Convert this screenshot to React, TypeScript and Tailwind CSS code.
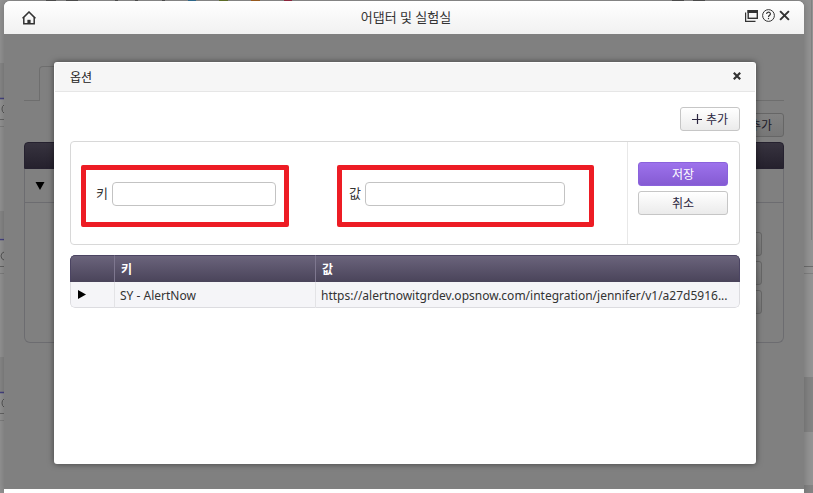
import { useState } from 'react'

const OPTIONS = [
  {
    key: 'SY - AlertNow',
    value: 'https://alertnowitgrdev.opsnow.com/integration/jennifer/v1/a27d5916...',
  },
]

const BUTTON =
  'h-6 rounded-[3px] border border-[#c6c6c6] bg-linear-to-b from-white to-[#ebebeb] pt-[2px] text-xs leading-none text-[#2b2640]'

function HomeIcon() {
  return (
    <svg width="14" height="14" viewBox="0 0 14 14" fill="none" stroke="#333" strokeWidth="1.5" aria-hidden="true">
      <path d="M0.6 7.4 L7 1 L13.4 7.4" />
      <path d="M1.8 6.4 V12.8 H12.2 V6.4" />
      <path d="M5.4 12.8 V8.8 H8.6 V12.8 Z" fill="#333" stroke="none" />
    </svg>
  )
}

function PopupIcon() {
  return (
    <svg width="13" height="12" viewBox="0 0 13 12" fill="none" stroke="#333" aria-hidden="true">
      <path d="M0.6 2.5 V11.4 H10.5" strokeWidth="1.2" />
      <rect x="3.2" y="0.7" width="9.1" height="7.6" strokeWidth="1.4" />
      <path d="M2.5 1.5 H13" strokeWidth="3" />
    </svg>
  )
}

function HelpIcon() {
  return (
    <svg width="13" height="13" viewBox="0 0 13 13" fill="none" stroke="#333" aria-hidden="true">
      <circle cx="6.5" cy="6.5" r="5.9" />
      <path d="M4.6 5.1 C4.6 2.6 8.4 2.6 8.4 4.9 C8.4 6.2 6.5 6.2 6.5 7.9" strokeWidth="1.2" />
      <path d="M6.5 8.9 V10.2" strokeWidth="1.2" />
    </svg>
  )
}

function CloseIcon({ size }: { size: number }) {
  return (
    <svg width={size} height={size} viewBox="0 0 10 10" stroke="#333" strokeWidth="1.8" aria-hidden="true">
      <path d="M1 1 L9 9 M9 1 L1 9" />
    </svg>
  )
}

function SmallCloseIcon() {
  return (
    <svg width="8" height="8" viewBox="0 0 8 8" stroke="#333" strokeWidth="2.2" aria-hidden="true">
      <path d="M0.8 0.8 L7.2 7.2 M7.2 0.8 L0.8 7.2" />
    </svg>
  )
}

function PlusIcon() {
  return (
    <svg className="-mt-[2px]" width="10" height="10" viewBox="0 0 10 10" stroke="currentColor" aria-hidden="true">
      <path d="M0 5.5 H10 M5.5 0 V10" strokeWidth="1.2" />
    </svg>
  )
}

// Slivers of the dashboard that show round the edge of the window
function Dashboard() {
  return (
    <div className="absolute inset-0 overflow-hidden bg-[#949494]" aria-hidden="true">
      <svg width="100%" height="1">
        <path d="M46 0.5 H56 M66 0.5 H78 M115 0.5 H118 M135 0.5 H138 M162 0.5 H165" stroke="#555" />
        <path d="M188 0.5 H196" stroke="#35759b" />
        <path d="M219 0.5 H228" stroke="#67792c" />
        <path d="M251 0.5 H260" stroke="#a96522" />
        <path d="M284 0.5 H292" stroke="#9c2a43" />
        <path d="M672 0.5 H684 M693 0.5 H705" stroke="#555" />
      </svg>
      <svg className="absolute left-0 top-0" width="4" height="493">
        <path d="M0 63 H4 V98 H0 Z M0 211 H4 V238 H0 Z M0 357 H4 V392 H0 Z" fill="#888" />
        <path d="M0 98.5 H4 M0 239.5 H4 M0 392.5 H4" stroke="#454280" strokeWidth="1.4" />
        <path d="M0 119.5 H4 M0 266.5 H4 M0 413.5 H4" stroke="#666" />
        <path d="M0 126.5 H4 M0 273.5 H4 M0 420.5 H4" stroke="#808080" />
        <path d="M4 105 Q2 106 2 109 Q2 112 4 113 M4 252 Q1 253 1 256 Q1 259 4 260 M4 399 Q2 400 2 403 Q2 406 4 407" stroke="#555" fill="none" />
      </svg>
      <svg className="absolute right-0 top-0" width="9" height="493">
        <path d="M7.5 0 V240" stroke="#828282" />
        <path d="M0 266.5 H9" stroke="#6d6d6d" />
        <path d="M0 273.5 H9" stroke="#808080" />
        <path d="M0 377 H9 V432 H0 Z M0 485 H9 V493 H0 Z" fill="#848484" />
      </svg>
    </div>
  )
}

// Adapter list, dimmed while the option dialog is open
function AdapterList() {
  return (
    <div className="px-5 pb-[146px] pt-8" inert>
      <div className="flex h-[35px]">
        <div className="w-[15px] border-b border-[#6e6e6e]" />
        <div className="w-24 rounded-t border border-b-0 border-[#6e6e6e]" />
        <div className="flex-1 border-b border-[#6e6e6e]" />
      </div>
      <div className="flex justify-end pb-[5px] pt-3">
        <button className="flex h-6 w-[60px] items-center justify-center gap-1 rounded-[3px] border border-[#666] bg-linear-to-b from-[#828282] to-[#777] pt-[2px] text-xs leading-none text-[#1c1a28]">
          <PlusIcon />
          추가
        </button>
      </div>
      <div className="h-[27px] rounded-t border border-[#25212f] bg-linear-to-b from-[#37333f] to-[#25212d]" />
      <div className="flex h-[34px] items-center border-x border-b border-[#6c6c70] px-[10px]">
        <svg width="10" height="8" viewBox="0 0 10 8" aria-hidden="true">
          <path d="M0.5 0 H9.5 L5 8 Z" fill="#000" />
        </svg>
      </div>
      <div className="flex h-[140px] flex-col items-end gap-[5px] rounded-b-md border-x border-b border-[#6c6c70] pr-[21px] pt-[29px]">
        {['top', 'middle', 'bottom'].map(name => (
          <div
            key={name}
            className="h-6 w-[90px] rounded-[3px] border border-[#666] bg-linear-to-b from-[#828282] to-[#777]"
          />
        ))}
      </div>
    </div>
  )
}

function OptionForm() {
  const [key, setKey] = useState('')
  const [value, setValue] = useState('')

  return (
    <form className="mt-[10px] flex h-[104px] rounded border border-[#d8d8d8]" onSubmit={e => e.preventDefault()}>
      <div className="flex flex-1 items-start gap-12 pl-[10px] pt-[23px]">
        <label className="flex h-[62px] items-center gap-1 rounded-[2px] border-[5px] border-[#ed1c24] pb-[4px] pl-[10px] pr-2 text-[13px] text-[#333]">
          키
          <input
            className="h-6 w-[164px] rounded border border-[#c3c3c3] bg-white px-1 outline-none"
            value={key}
            onChange={e => setKey(e.target.value)}
          />
        </label>
        <label className="flex h-[62px] items-center gap-1 rounded-[2px] border-[5px] border-[#ed1c24] pb-[4px] pl-[7px] pr-6 text-[13px] text-[#333]">
          값
          <input
            className="h-6 w-[200px] rounded border border-[#c3c3c3] bg-white px-1 outline-none"
            value={value}
            onChange={e => setValue(e.target.value)}
          />
        </label>
      </div>
      <div className="flex w-[112px] flex-col gap-[5px] border-l border-[#e8e8e8] pl-[10px] pr-[11px] pt-5">
        <button
          type="submit"
          className="h-6 rounded-[3px] border border-[#8a62dc] bg-linear-to-b from-[#9d72ec] to-[#855bd3] pt-[2px] text-xs leading-none text-white"
        >
          저장
        </button>
        <button type="button" className={BUTTON}>
          취소
        </button>
      </div>
    </form>
  )
}

function OptionTable() {
  return (
    <div className="mt-[10px] overflow-hidden rounded-[5px]">
      <table className="w-full table-fixed border-separate border-spacing-0 text-xs">
        <colgroup>
          <col className="w-11" />
          <col className="w-[201px]" />
          <col />
        </colgroup>
        <thead>
          <tr className="h-[27px] bg-linear-to-b from-[#6c657d] to-[#4a445a] text-left text-white">
            <th className="rounded-tl-[5px] border-l border-t border-[#4b4462] p-0" />
            <th className="border-l border-t border-l-[#7e778f] border-t-[#4b4462] px-[6px] pb-0 pt-[2px] font-bold">키</th>
            <th className="rounded-tr-[5px] border-x border-t border-l-[#7e778f] border-r-[#4b4462] border-t-[#4b4462] px-[6px] pb-0 pt-[2px] font-bold">
              값
            </th>
          </tr>
        </thead>
        <tbody>
          {OPTIONS.map(o => (
            <tr key={o.key} className="h-[26px] bg-[#f5f5f8] text-[#333]">
              <td className="rounded-bl-[5px] border-b border-l border-[#dcdce0] p-0 pl-[7px]">
                <svg width="8" height="9" viewBox="0 0 8 9" aria-hidden="true">
                  <path d="M0 0 L8 4.5 L0 9 Z" fill="#000" />
                </svg>
              </td>
              <td className="border-b border-l border-b-[#dcdce0] border-l-[#e3e3e6] px-[5px] pb-0 pt-[2px] font-['Noto_Sans',sans-serif]">
                {o.key}
              </td>
              <td className="whitespace-nowrap rounded-br-[5px] border-x border-b border-b-[#dcdce0] border-l-[#e3e3e6] border-r-[#dcdce0] px-[5px] pb-0 pt-[2px] font-['Noto_Sans',sans-serif]">
                {o.value}
              </td>
            </tr>
          ))}
        </tbody>
      </table>
    </div>
  )
}

function OptionDialog() {
  return (
    <section
      role="dialog"
      aria-labelledby="option-title"
      className="absolute bottom-[25px] left-[50px] right-12 top-7 overflow-hidden rounded-[3px] bg-white shadow-[0_0_6px_rgba(0,0,0,0.5)]"
    >
      <header className="m-px mb-0 flex h-[29px] items-center justify-between border-b border-[#e6e6e6] bg-[#f6f6f6] pl-[15px] pr-[14px]">
        <h2 id="option-title" className="pt-[2px] text-xs text-[#222]">
          옵션
        </h2>
        <button className="pb-[2px]" aria-label="닫기">
          <SmallCloseIcon />
        </button>
      </header>
      <div className="px-4 pt-[15px]">
        <div className="flex justify-end">
          <button className={`${BUTTON} flex w-[60px] items-center justify-center gap-1`}>
            <PlusIcon />
            추가
          </button>
        </div>
        <OptionForm />
        <OptionTable />
      </div>
    </section>
  )
}

export default function App() {
  return (
    <div className="relative flex min-h-screen flex-col overflow-hidden pl-1 pr-[9px] pt-px font-['Open_Sans','Noto_Sans_CJK_KR',sans-serif]">
      <Dashboard />
      <div className="relative flex flex-1 flex-col rounded-t-md bg-white shadow-[0_0_8px_rgba(0,0,0,0.25)]">
        <header className="grid h-[33px] grid-cols-[1fr_auto_1fr] items-center rounded-t-md bg-linear-to-b from-white to-[#f1f1f1] px-[14px] pl-[18px]">
          <a href="#home" aria-label="홈">
            <HomeIcon />
          </a>
          <h1 className="text-[13px] text-[#333]">어댑터 및 실험실</h1>
          <div className="flex items-center justify-end gap-1 pb-[4px]">
            <button aria-label="새 창">
              <PopupIcon />
            </button>
            <button aria-label="도움말">
              <HelpIcon />
            </button>
            <button aria-label="창 닫기">
              <CloseIcon size={11} />
            </button>
          </div>
        </header>
        <main className="relative bg-[#808080]">
          <AdapterList />
          <OptionDialog />
        </main>
      </div>
    </div>
  )
}
